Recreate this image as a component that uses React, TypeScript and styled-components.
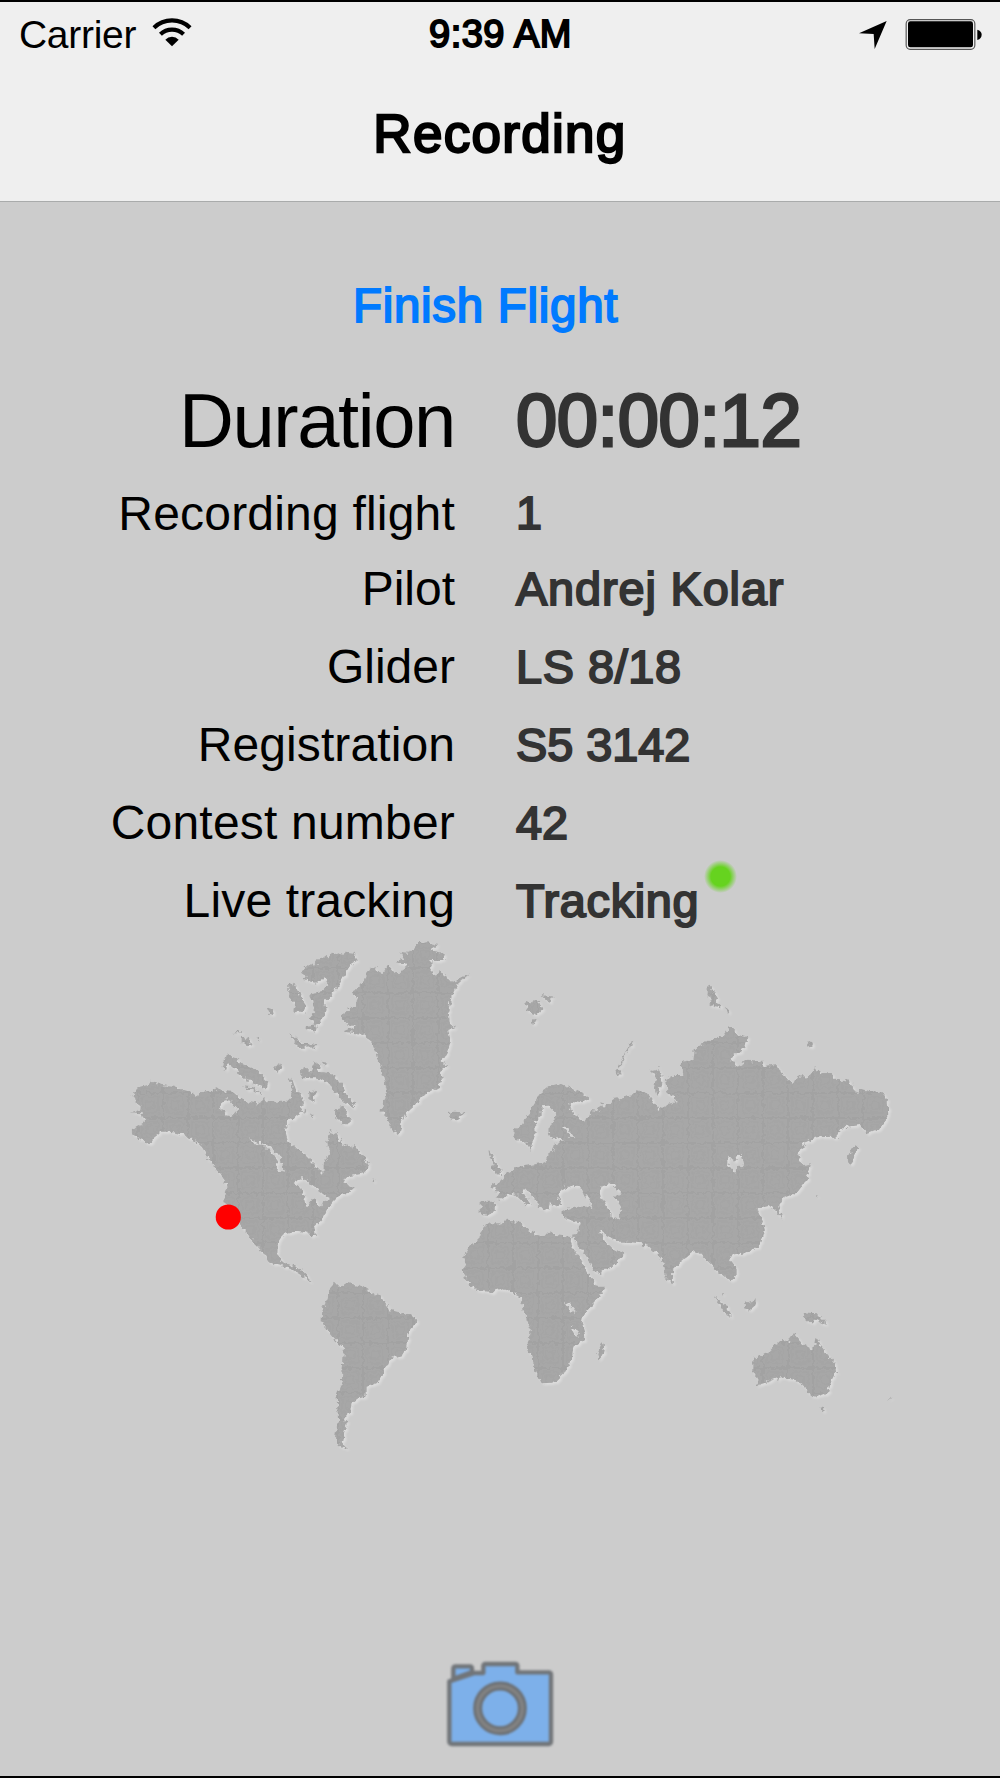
import React from "react";
import styled, {createGlobalStyle, css} from "styled-components";

interface FlightField {
  id: number;
  label: string;
  value: string;
  height: number;
  size?: number;
  labelSpacing?: number;
  valueSpacing?: number;
  live?: boolean;
}

interface Land {
  name: string;
  x: number;
  y: number;
  d: string;
}

const flightFields: FlightField[] = [
  {id: 1, label: "Duration", value: "00:00:12", height: 113.8, size: 76, labelSpacing: -1.4, valueSpacing: -0.4},
  {id: 2, label: "Recording flight", value: "1", height: 71.8, labelSpacing: 0.2},
  {id: 3, label: "Pilot", value: "Andrej Kolar", height: 78.2, valueSpacing: 0.9},
  {id: 4, label: "Glider", value: "LS 8/18", height: 78.2, valueSpacing: 0.6},
  {id: 5, label: "Registration", value: "S5 3142", height: 78.2, labelSpacing: 0.1},
  {id: 6, label: "Contest number", value: "42", height: 78.2, labelSpacing: 0.2},
  {id: 7, label: "Live tracking", value: "Tracking", height: 78.2, labelSpacing: 0.15, valueSpacing: 0.7, live: true},
];

// outlines are in thirds of a pixel, x/y is the region's origin on the page
const lands: Land[] = [
  {
    name: "north-america",
    x: 120,
    y: 930,
    d: "M35 500L60 470L80 465L95 452L125 465L160 470L210 485L225 497L240 490L265 485L290 475L300 482L340 485L375 512L420 522L432 505L445 515L500 515L515 500L520 478L505 440L518 448L528 480L545 492L552 520L535 555L505 575L495 600L505 635L550 670L610 730L612 695L628 675L622 640L630 603L650 610L665 640L690 655L705 645L720 670L750 710L730 730L680 740L670 760L700 775L692 785L660 795L640 815L620 840L610 865L580 895L585 920L565 908L535 903L490 915L477 935L475 975L485 990L500 1003L530 1010L555 1030L580 1060L550 1040L515 1018L470 1005L445 995L430 970L395 930L370 895L330 840L313 815L315 780L325 765L290 720L270 690L245 650L215 625L190 615L150 605L125 605L100 625L90 642L60 630L35 605L50 590L75 575L65 550L30 547L62 537L55 515ZM300 515L325 508L340 525L355 540L335 560L315 555L305 540ZM390 620L402 634L440 645L465 660L480 680L492 725L470 720L472 695L455 672L430 645L402 642ZM520 750L550 745L590 775L630 805L625 815L610 815L605 830L590 825L580 805L565 825L555 820L545 780Z",
  },
  {
    name: "arctic-islands",
    x: 200,
    y: 930,
    d: "M80 372L110 385L130 405L170 420L205 455L200 475L170 465L120 435L110 420L85 400L75 425L68 410ZM125 468L160 472L185 490L175 488L150 478ZM125 320L150 330L155 348L125 340ZM200 232L216 238L222 258L207 248ZM98 310L120 302L118 310ZM170 322L178 325L176 335ZM300 125L330 100L345 105L360 80L375 83L400 65L415 75L440 65L460 68L475 90L450 105L430 145L400 190L375 215L380 240L350 295L340 270L325 265L345 245L330 190L360 185L385 165L375 145L345 158L310 150L320 140ZM265 165L280 158L300 195L320 225L310 245L280 245L285 220L265 200ZM320 290L355 285L350 305L320 300ZM270 310L300 335L350 345L350 352L295 354L280 330ZM222 410L240 400L250 415L232 425ZM300 420L315 410L330 425L345 395L360 405L355 425L395 430L425 465L440 495L465 520L460 535L425 510L400 480L380 455L345 445L310 445ZM365 395L382 398L378 410ZM405 545L415 535L430 530L455 572L440 585L405 562ZM328 480L345 483L340 515L328 507ZM306 542L318 542L315 555ZM328 550L340 552L338 562ZM745 548L765 545L795 548L770 568L752 565Z",
  },
  {
    name: "greenland",
    x: 200,
    y: 930,
    d: "M425 265L440 240L465 230L470 205L455 185L475 175L490 155L500 125L525 110L540 132L550 130L565 105L585 130L605 128L620 105L590 95L612 85L600 65L625 68L645 60L650 42L680 37L715 45L690 60L735 70L730 90L690 90L702 102L690 115L705 135L725 122L740 145L760 155L810 130L770 165L755 200L745 240L750 280L765 292L745 300L752 335L740 370L725 395L740 405L718 430L735 440L715 470L680 490L650 520L620 545L605 575L600 610L575 600L560 560L545 545L550 515L560 480L550 440L540 410L530 370L515 335L485 312L430 305L465 290L440 280Z",
  },
  {
    name: "south-america",
    x: 180,
    y: 1130,
    d: "M445 480L465 458L480 474L500 458L545 470L575 490L605 500L615 520L630 540L665 550L690 553L712 572L700 590L685 610L682 650L665 675L625 690L610 725L590 760L560 770L560 795L540 802L515 820L510 850L495 860L500 885L490 915L485 940L505 958L480 948L465 920L474 870L470 800L485 760L487 730L492 655L460 625L440 600L425 570L427 540L443 510ZM575 145L584 150L580 160Z",
  },
  {
    name: "eurasia",
    x: 440,
    y: 940,
    d: "M152 732L175 735L200 700L235 680L270 675L300 670L320 665L325 640L340 632L345 610L375 603L355 598L330 590L325 570L335 550L350 520L330 500L305 502L305 525L285 545L287 580L270 630L255 605L225 600L220 575L245 555L262 530L275 500L300 460L330 438L360 430L390 442L430 462L445 480L430 490L385 485L390 505L420 540L432 548L445 530L455 510L470 512L485 490L495 500L520 478L580 465L590 450L620 458L635 480L655 508L680 495L710 490L680 450L675 420L705 405L730 405L725 365L760 360L765 325L810 300L850 290L870 260L895 285L922 292L910 325L870 355L890 380L920 362L965 365L980 380L1010 375L1025 400L1060 430L1070 410L1110 408L1125 385L1145 400L1170 400L1190 420L1230 425L1252 462L1260 447L1325 460L1343 480L1345 530L1320 565L1285 578L1260 555L1210 562L1190 590L1130 592L1100 605L1072 645L1090 675L1112 672L1100 720L1070 760L1030 775L1015 800L1030 838L1005 810L985 795L950 805L965 840L975 870L962 915L930 935L865 950L890 985L890 1005L870 1022L840 1000L805 965L780 940L760 935L730 960L700 985L698 1035L678 1010L670 965L650 940L625 918L600 910L560 905L530 905L480 872L495 905L520 930L555 940L530 970L480 1000L465 995L440 950L415 915L400 890L385 890L410 885L422 850L405 842L370 830L360 815L400 800L460 800L440 775L430 750L405 735L370 745L355 770L360 795L345 800L330 790L325 812L310 808L285 780L255 745L248 755L275 795L260 795L230 765L205 760L185 780L170 775L175 760ZM480 740L515 732L545 760L525 770L545 800L540 835L520 840L500 800L485 770ZM865 650L885 660L905 645L912 670L885 698L865 675ZM368 562L385 567L403 592L392 590Z",
  },
  {
    name: "europe-islands",
    x: 440,
    y: 940,
    d: "M122 785L165 785L165 805L150 825L122 822ZM145 630L158 650L170 672L187 702L170 700L152 690L160 668L148 650ZM255 185L275 190L290 180L310 205L290 225L265 215ZM305 165L345 170L325 185ZM275 240L290 235L278 258ZM528 385L545 400L535 410ZM532 390L550 350L570 310L580 305L558 342L540 385ZM635 390L658 385L668 400L660 450L650 465L642 440L648 415ZM485 1210L495 1215L485 1255L475 1260L472 1240Z",
  },
  {
    name: "africa",
    x: 440,
    y: 940,
    d: "M70 950L90 915L115 900L120 880L135 860L150 850L180 850L205 842L235 845L255 865L290 885L310 892L325 875L350 885L385 890L400 925L430 975L450 1010L470 1040L495 1040L470 1080L430 1125L425 1150L435 1180L430 1200L400 1220L395 1260L370 1300L340 1328L305 1330L285 1290L275 1250L262 1220L272 1170L265 1145L248 1115L243 1075L215 1055L190 1045L155 1055L110 1053L75 1015L68 990L78 975ZM375 1085L405 1105L400 1120L388 1108ZM392 1160L420 1175L410 1197Z",
  },
  {
    name: "siberian-islands",
    x: 660,
    y: 940,
    d: "M140 142L152 130L165 168L185 205L165 202L148 190L155 175L140 165ZM195 200L210 212L200 218ZM440 300L460 312L442 320ZM570 680L560 655L580 618L595 620L580 655Z",
  },
  {
    name: "oceania",
    x: 640,
    y: 1150,
    d: "M340 625L385 610L400 590L430 570L445 575L462 552L485 580L515 597L525 590L530 562L540 585L560 610L585 640L588 665L575 690L565 725L530 742L510 735L495 710L465 690L420 682L385 695L355 705L348 680L340 665ZM220 438L250 458L276 502L255 490L240 465ZM245 430L255 432L250 440ZM312 465L335 455L350 445L350 465L330 482L315 478ZM365 465L372 470ZM488 487L530 490L562 525L530 510L515 522L490 500ZM745 738L751 744L746 752ZM545 772L552 776L547 781ZM525 138L534 140L530 143Z",
  },
];

const WifiIcon: React.FC = () => (
  <svg width="40" height="30" viewBox="458 50 120 90">
    <path
      d="M463.8 81.9A78 78 0 0 1 572.2 81.9M483.3 102A50 50 0 0 1 552.7 102"
      fill="none"
      stroke="#000"
      strokeWidth="12.5"
    />
    <path d="M518 138L498 118A28 28 0 0 1 538 118Z" />
  </svg>
);

const LocationIcon: React.FC = () => (
  <svg width="28" height="28" viewBox="1080 60 84 84">
    <path d="M1163 60L1127 144L1124 99L1080 97Z" />
  </svg>
);

const BatteryIcon: React.FC = () => (
  <svg width="77" height="32" viewBox="1217 54 231 96">
    <rect x="1220.5" y="56" width="206" height="89" rx="12" fill="none" stroke="#555" strokeWidth="3.5" />
    <rect x="1226" y="61" width="195" height="78" rx="7" />
    <path d="M1434 86Q1447 90 1447 101T1434 117Z" />
  </svg>
);

const CameraIcon: React.FC = () => (
  <svg width="160" height="136" viewBox="0 0 480 408">
    <g fill="#7db0ea" stroke="#717579" strokeWidth="13" strokeLinejoin="round">
      <path d="M100 116V86Q100 79 107 79H150Q156 79 156 86V96Z" />
      <path d="M88 124L164 99H190V79Q190 72 197 72H286Q292 72 292 79V97H386Q393 97 393 104V304Q393 312 386 312H96Q88 312 88 304Z" />
    </g>
    <circle cx="240" cy="205" r="67" fill="none" stroke="#6c7074" strokeWidth="27" />
    <circle cx="240" cy="205" r="67" fill="none" stroke="#828282" strokeWidth="11" />
  </svg>
);

const WorldMap: React.FC = () => (
  <StyledMap width="1000" height="520" viewBox="0 939 1000 520">
    <defs>
      <pattern id="weave" x="712" y="1142" width="25" height="25" patternUnits="userSpaceOnUse">
        <rect width="25" height="25" fill="#a7a7a7" />
        <path d="M0 0H25M0 0V25" stroke="#a2a2a2" strokeWidth="4" />
        <rect x="5" y="5" width="16" height="16" fill="none" stroke="#a3a3a3" />
        <rect x="9" y="9" width="8" height="8" fill="none" stroke="#a3a3a3" />
      </pattern>
      <clipPath id="land">
        {lands.map(({name, x, y, d}) => (
          <path key={name} transform={`translate(${x} ${y}) scale(0.33333)`} d={d} clipRule="evenodd" />
        ))}
      </clipPath>
      {/* ragged coastline with a light lower right edge */}
      <filter id="coast" x="0" y="939" width="1000" height="520" filterUnits="userSpaceOnUse" colorInterpolationFilters="sRGB">
        <feTurbulence type="fractalNoise" baseFrequency="0.22" numOctaves="2" seed="4" result="noise" />
        <feDisplacementMap in="SourceGraphic" in2="noise" scale="7" xChannelSelector="R" yChannelSelector="G" />
        <feGaussianBlur stdDeviation="0.5" result="shape" />
        <feDropShadow dx="2" dy="2" stdDeviation="1.2" floodColor="#fff" floodOpacity="0.32" />
      </filter>
    </defs>
    <g filter="url(#coast)">
      <rect y="939" width="1000" height="520" fill="url(#weave)" clipPath="url(#land)" />
    </g>
    <circle cx="228.3" cy="1217" r="12.6" fill="#f00" />
  </StyledMap>
);

const App: React.FC = () => {
  return (
    <>
      <GlobalStyle />
      <StyledScreen>
        <StyledHeader>
          <StyledStatusBar>
            <StyledCarrier>
              Carrier
              <WifiIcon />
            </StyledCarrier>
            <StyledTime>9:39 AM</StyledTime>
            <StyledIndicators>
              <LocationIcon />
              <BatteryIcon />
            </StyledIndicators>
          </StyledStatusBar>
          <StyledTitle>Recording</StyledTitle>
        </StyledHeader>
        <StyledFinishButton type="button">Finish Flight</StyledFinishButton>
        <StyledFields>
          {flightFields.map((field) => (
            <StyledRow key={field.id} $height={field.height} $size={field.size}>
              <StyledLabel $spacing={field.labelSpacing}>{field.label}</StyledLabel>
              <StyledValue $spacing={field.valueSpacing} $stroke={field.size ? 2.8 : 2}>
                {field.value}
                {field.live && <StyledLiveDot />}
              </StyledValue>
            </StyledRow>
          ))}
        </StyledFields>
        <WorldMap />
        <StyledCameraButton type="button" aria-label="Camera">
          <CameraIcon />
        </StyledCameraButton>
      </StyledScreen>
    </>
  );
};

export default App;

const GlobalStyle = createGlobalStyle`
  * {
    box-sizing: border-box;
  }

  body {
    margin: 0;
    background-color: #ccc;
    font-family: "Liberation Sans", Arial, sans-serif;
  }

  svg {
    display: block;
    flex-shrink: 0;
  }
`;

// medium weight, between regular and bold
const mediumMixin = css<{$stroke?: number}>`
  -webkit-text-stroke: ${({$stroke}) => $stroke || 1.9}px currentColor;
`;

const buttonMixin = css`
  padding: 0;
  border: 0;
  background: none;
  font-family: inherit;
`;

const StyledScreen = styled.div`
  display: flex;
  flex-direction: column;
  width: 1000px;
  height: 1778px;
  border-top: 2px solid #000;
  border-bottom: 2px solid #000;
  background-color: #ccc;
  overflow: hidden;
`;

const StyledHeader = styled.header`
  flex-shrink: 0;
  height: 200px;
  border-bottom: 1px solid #a9abab;
  background-color: #efefef;
`;

const StyledStatusBar = styled.div`
  display: grid;
  grid-template-columns: 1fr auto 1fr;
  align-items: center;
  height: 65px;
  padding: 0 18px 0 19px;
  font-size: 39px;
`;

const StyledCarrier = styled.div`
  display: flex;
  align-items: center;
  gap: 16px;
  letter-spacing: -0.3px;

  svg {
    margin-top: -6px;
  }
`;

const StyledTime = styled.div`
  ${mediumMixin};
  font-size: 38px;
  letter-spacing: 0.5px;
`;

const StyledIndicators = styled.div`
  display: flex;
  align-items: center;
  justify-content: flex-end;
  gap: 18px;
`;

const StyledTitle = styled.h1<{$stroke?: number}>`
  ${mediumMixin};
  margin: 0;
  font-size: 53px;
  font-weight: 400;
  line-height: 133px;
  letter-spacing: 1.3px;
  text-align: center;
  -webkit-text-stroke-width: 2.3px;
`;

const StyledFinishButton = styled.button`
  ${buttonMixin};
  ${mediumMixin};
  flex-shrink: 0;
  align-self: flex-start;
  margin: 45px 0 0 353px;
  height: 117px;
  color: #007aff;
  font-size: 47.5px;
  letter-spacing: 0.7px;
  white-space: nowrap;
`;

const StyledFields = styled.dl`
  flex-shrink: 0;
  margin: 0;
`;

const StyledRow = styled.div<{$height: number; $size?: number}>`
  display: grid;
  grid-template-columns: 455px 1fr;
  column-gap: 61px;
  height: ${({$height}) => $height}px;
  font-size: ${({$size}) => $size || 48}px;
  line-height: ${({$height}) => $height}px;
  white-space: nowrap;
`;

const StyledLabel = styled.dt<{$spacing?: number}>`
  letter-spacing: ${({$spacing}) => $spacing || 0}px;
  text-align: right;
`;

const StyledValue = styled.dd<{$spacing?: number; $stroke?: number}>`
  ${mediumMixin};
  position: relative;
  margin: 0;
  color: #333;
  font-size: 0.975em;
  letter-spacing: ${({$spacing}) => $spacing || 0}px;
`;

const StyledLiveDot = styled.span`
  position: absolute;
  top: -2px;
  left: 188px;
  width: 33px;
  height: 33px;
  border-radius: 50%;
  background: radial-gradient(circle closest-side, #66d31f 0 58%, rgba(102, 211, 31, 0) 100%);
`;

const StyledMap = styled.svg`
  flex-shrink: 0;
  margin-top: -2px;
`;

const StyledCameraButton = styled.button`
  ${buttonMixin};
  flex-shrink: 0;
  align-self: center;
  margin-top: auto;

  svg {
    filter: blur(0.8px);
  }
`;
